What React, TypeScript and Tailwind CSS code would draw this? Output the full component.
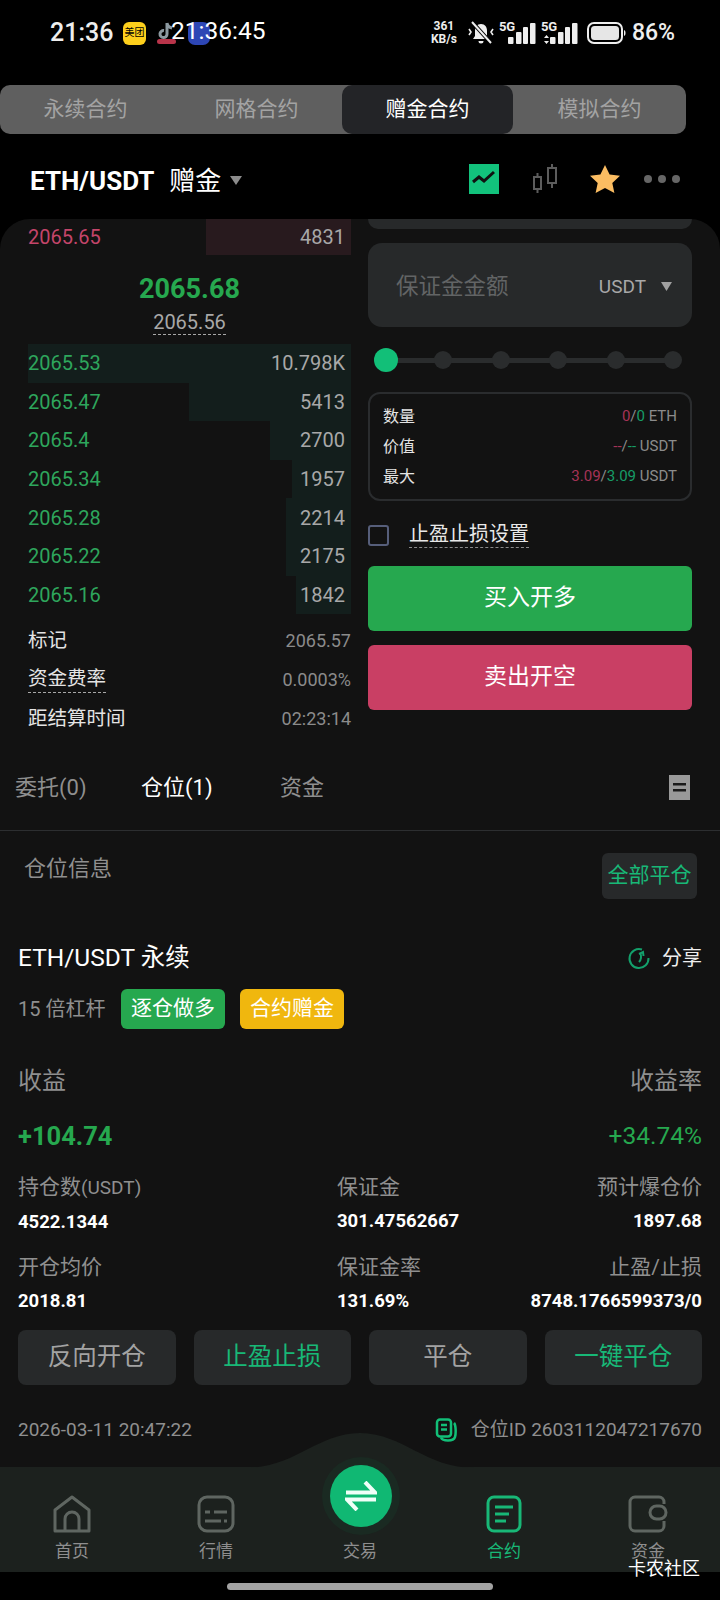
import React from 'react';

const FONT = "font-['Roboto','Noto_Sans_CJK_SC',sans-serif]";

const asks = { price: '2065.65', size: '4831', bar: 145 };
const bids = [
  { price: '2065.53', size: '10.798K', bar: 323 },
  { price: '2065.47', size: '5413', bar: 162 },
  { price: '2065.4', size: '2700', bar: 81 },
  { price: '2065.34', size: '1957', bar: 59 },
  { price: '2065.28', size: '2214', bar: 65 },
  { price: '2065.22', size: '2175', bar: 65 },
  { price: '2065.16', size: '1842', bar: 55 },
];

const Signal = ({ arrows }: { arrows?: boolean }) => (
  <div className="relative h-[24px] w-[37px]">
    <span className="absolute top-[-1px] left-0 text-[13px] leading-[14px] font-bold">5G</span>
    <svg width="37" height="24" viewBox="0 0 37 24">
      {arrows && <path d="M3 17l2.500-3 2.500 3zM3 20l2.500 3 2.500-3z" fill="#eee" />}
      <rect x="9" y="16" width="5.500" height="7" rx="1" fill="#eee" />
      <rect x="17" y="11" width="5.500" height="12" rx="1" fill="#eee" />
      <rect x="24" y="6" width="5" height="17" rx="1" fill="#eee" />
      <rect x="31" y="2" width="5.500" height="21" rx="1" fill="#eee" />
    </svg>
  </div>
);

const StatusBar = () => (
  <div className="relative h-[85px] shrink-0 text-[#eeeeee]">
    <div className="flex items-center pt-[20px] pr-[45px] pl-[50px]">
      <span className="w-[73px] text-[25px] leading-[26px] font-medium">21:36</span>
      <div className="flex h-[23px] w-[23px] items-center justify-center rounded-[6px] bg-[#fdcf1c] text-[10px] leading-none text-black">美团</div>
      <svg width="22" height="24" viewBox="0 0 22 24" className="ml-[10px]">
        <path d="M11 2v11a3.500 3.500 0 1 1-3-3.400M11 2c.5 3 2.500 4.600 5 5" fill="none" stroke="#8c99a0" strokeWidth="3" />
        <rect x="1" y="18" width="19" height="5" rx="2.500" fill="#b8344a" />
      </svg>
      <div className="ml-[10px] h-[23px] w-[22px] rounded-[7px] bg-[#2d46b5]" />
      <div className="ml-auto flex items-center">
        <div className="flex w-[26px] flex-col items-center text-[12px] leading-[13px] font-bold">
          <span>361</span>
          <span>KB/s</span>
        </div>
        <svg width="26" height="24" viewBox="0 0 26 24" className="ml-[11px]">
          <path d="M13 3c-4 0-6 3-6 7v5l-2 3h16l-2-3v-5c0-4-2-7-6-7zM10.500 20a2.500 2.500 0 0 0 5 0z" fill="#eee" />
          <path d="M4 1l19 21" stroke="#000" strokeWidth="4" />
          <path d="M4 1l19 21" stroke="#eee" strokeWidth="2" />
          <path d="M1 8l2 3-2 3M25 8l-2 3 2 3" fill="none" stroke="#eee" strokeWidth="1.600" />
        </svg>
        <div className="ml-[5px]"><Signal /></div>
        <div className="ml-[5px]"><Signal arrows /></div>
        <svg width="40" height="22" viewBox="0 0 40 22" className="ml-[9px]">
          <rect x="1" y="1" width="34" height="20" rx="6" fill="none" stroke="#eee" strokeWidth="2" />
          <rect x="4" y="4" width="28" height="14" rx="3.500" fill="#e6e6e6" />
          <path d="M37 8c2 .5 2 5.500 0 6z" fill="#eee" />
        </svg>
        <span className="ml-[5px] text-[23px] leading-[26px] font-medium">86%</span>
      </div>
    </div>
    <span className="absolute top-[17px] left-[171px] text-[24.5px] leading-[28px] text-white">21:36:45</span>
  </div>
);

const ContractTabs = () => (
  <div className="flex h-[49px] w-[686px] shrink-0 items-stretch rounded-[10px] bg-[#5f5f5f] text-[21px] text-[#a3a3a3]">
    <div className="flex w-[171px] items-center justify-center">永续合约</div>
    <div className="flex w-[171px] items-center justify-center">网格合约</div>
    <div className="flex w-[171px] items-center justify-center rounded-[10px] bg-[#232427] text-white">赠金合约</div>
    <div className="flex w-[173px] items-center justify-center">模拟合约</div>
  </div>
);

const PairHeader = () => (
  <div className="flex h-[85px] shrink-0 items-center pt-[8px] pl-[30px]">
    <span className="text-[26px] leading-none font-bold text-white">ETH/USDT</span>
    <span className="ml-[15px] text-[26px] leading-none text-white">赠金</span>
    <svg width="12" height="9" viewBox="0 0 12 9" className="ml-[9px]"><path d="M0 0h12L6 9z" fill="#8c8c8c" /></svg>
    <div className="ml-auto flex items-center pr-[40px] pb-[3px]">
      <svg width="30" height="30" viewBox="0 0 30 30">
        <rect width="30" height="30" fill="#12c27c" />
        <path d="M4 18l6-5 5 4 10-9" fill="none" stroke="#101010" strokeWidth="3" />
      </svg>
      <svg width="26" height="30" viewBox="0 0 26 30" className="ml-[33px]">
        <g fill="none" stroke="#5c5c5c" strokeWidth="2">
          <rect x="2" y="13" width="7" height="12" />
          <path d="M5.500 9v4M5.500 25v4" />
          <rect x="16" y="4" width="8" height="15" />
          <path d="M20 0v4M20 19v5" />
        </g>
      </svg>
      <svg width="32" height="30" viewBox="0 0 32 30" className="ml-[31px]">
        <path d="M16 1l4.600 9.500 10.400 1.300-7.700 7.100 2.100 10.200L16 24l-9.400 5.100 2.100-10.200L1 11.800l10.400-1.300z" fill="#fbbd62" />
      </svg>
      <div className="ml-[23px] flex gap-[6px]">
        <div className="h-[8px] w-[8px] rounded-full bg-[#666666]" />
        <div className="h-[8px] w-[8px] rounded-full bg-[#666666]" />
        <div className="h-[8px] w-[8px] rounded-full bg-[#666666]" />
      </div>
    </div>
  </div>
);

const BookRow = ({ price, size, bar, ask }: { price: string; size: string; bar: number; ask?: boolean }) => (
  <div className={`relative flex items-center justify-between pr-[6px] text-[20px] leading-none ${ask ? 'h-[36px]' : 'h-[38.6px]'}`}>
    <div className={`absolute top-0 right-0 bottom-0 ${ask ? 'bg-[#281a1e]' : 'bg-[#131e1c]'}`} style={{ width: bar }} />
    <span className={`relative ${ask ? 'text-[#c4456a]' : 'text-[#2ea65c]'}`}>{price}</span>
    <span className="relative text-[#a8a8a8]">{size}</span>
  </div>
);

const InfoRow = ({ label, value, dashed }: { label: string; value: string; dashed?: boolean }) => (
  <div className="flex h-[39px] items-center justify-between">
    <span className={`text-[19.5px] leading-[26px] text-[#e4e4e4] ${dashed ? 'border-b border-dashed border-[#a8a8a8]' : ''}`}>{label}</span>
    <span className="text-[18px] leading-none text-[#8b8b8b]">{value}</span>
  </div>
);

const OrderBook = () => (
  <div className="w-[323px] shrink-0">
    <BookRow price={asks.price} size={asks.size} bar={asks.bar} ask />
    <div className="flex h-[89px] flex-col items-center pt-[16px]">
      <span className="text-[27px] leading-[36px] font-bold text-[#26a84f]">2065.68</span>
      <span className="mt-[3px] border-b border-dashed border-[#a8a8a8] text-[20px] leading-[24px] text-[#a8a8a8]">2065.56</span>
    </div>
    {bids.map((b) => <BookRow key={b.price} {...b} />)}
    <div className="mt-[7px] flex flex-col">
      <InfoRow label="标记" value="2065.57" />
      <InfoRow label="资金费率" value="0.0003%" dashed />
      <InfoRow label="距结算时间" value="02:23:14" />
    </div>
  </div>
);

const TradeForm = () => (
  <div className="ml-[17px] w-[324px] shrink-0">
    <div className="h-[10px] rounded-b-[14px] bg-[#27292a]" />
    <div className="mt-[14px] flex h-[84px] items-center rounded-[14px] bg-[#27292a] pt-[4px] pr-[20px] pl-[28px]">
      <span className="text-[22.5px] text-[#626465]">保证金金额</span>
      <span className="ml-auto text-[19px] text-[#a8a8a8]">USDT</span>
      <svg width="11" height="9" viewBox="0 0 11 9" className="mb-[2px] ml-[15px]"><path d="M0 0h11L5.500 9z" fill="#a0a0a0" /></svg>
    </div>
    <div className="relative mt-[21px] flex h-[24px] items-center pl-[6px]">
      <div className="absolute top-[10px] right-[12px] left-[12px] h-[5px] bg-[#2a2c2d]" />
      <div className="relative h-[24px] w-[24px] rounded-full bg-[#12bf78]" />
      <div className="relative ml-[36px] flex gap-[39.6px]">
        {[0, 1, 2, 3, 4].map((i) => <div key={i} className="h-[18px] w-[18px] rounded-full bg-[#2a2c2d]" />)}
      </div>
    </div>
    <div className="mt-[20px] flex h-[109px] flex-col justify-center rounded-[12px] border-2 border-[#2a2c2e] px-[13px]">
      <div className="flex h-[30px] items-center justify-between text-[16px] text-[#e4e4e4]">
        <span>数量</span>
        <span className="text-[15px] text-[#8b8b8b]"><span className="text-[#a63357]">0</span>/<span className="text-[#179c67]">0</span> ETH</span>
      </div>
      <div className="flex h-[30px] items-center justify-between text-[16px] text-[#e4e4e4]">
        <span>价值</span>
        <span className="text-[15px] text-[#8b8b8b]"><span className="text-[#a63357]">--</span>/<span className="text-[#179c67]">--</span> USDT</span>
      </div>
      <div className="flex h-[30px] items-center justify-between text-[16px] text-[#e4e4e4]">
        <span>最大</span>
        <span className="text-[15px] text-[#8b8b8b]"><span className="text-[#a63357]">3.09</span>/<span className="text-[#179c67]">3.09</span> USDT</span>
      </div>
    </div>
    <div className="mt-[21px] flex h-[26px] items-center">
      <div className="h-[21px] w-[21px] rounded-[3px] border-2 border-[#565e7a]" />
      <span className="ml-[20px] border-b border-dashed border-[#8a8a8a] text-[20px] leading-[25px] text-[#e8e8e8]">止盈止损设置</span>
    </div>
    <div className="mt-[18px] flex h-[65px] items-center justify-center rounded-[6px] bg-[#26a84f] text-[23px] text-white">买入开多</div>
    <div className="mt-[14px] flex h-[65px] items-center justify-center rounded-[6px] bg-[#c93f64] text-[23px] text-white">卖出开空</div>
  </div>
);

const RecordTabs = () => (
  <div className="flex h-[78px] items-center border-b border-[#2c2e30] pr-[30px] pb-[8px] pl-[15px] text-[22px] text-[#8f8f8f]">
    <span className="w-[126px]">委托(0)</span>
    <span className="w-[139px] text-white">仓位(1)</span>
    <span>资金</span>
    <svg width="21" height="25" viewBox="0 0 21 25" className="ml-auto">
      <rect width="21" height="25" fill="#999999" />
      <rect x="4" y="8" width="13" height="2.500" fill="#1a1a1a" />
      <rect x="4" y="14" width="13" height="2.500" fill="#1a1a1a" />
    </svg>
  </div>
);

const Stat = ({ label, value, right }: { label: React.ReactNode; value: string; right?: boolean }) => (
  <div className={`flex flex-col ${right ? 'items-end' : 'items-start'}`}>
    <span className="text-[21px] leading-[28px] text-[#8f8f8f]">{label}</span>
    <span className="mt-[6px] text-[18.5px] leading-[28px] font-bold text-white">{value}</span>
  </div>
);

const PositionCard = () => (
  <div className="px-[18px]">
    <div className="flex h-[69px] items-start justify-between pt-[22px] pr-[5px] pl-[6px]">
      <span className="text-[22px] leading-[32px] text-[#8f8f8f]">仓位信息</span>
      <div className="flex h-[46px] w-[95px] items-center justify-center rounded-[6px] bg-[#27292a] text-[21px] text-[#18b877]">全部平仓</div>
    </div>
    <div className="mt-[40px] flex h-[36px] items-center">
      <span className="text-[24.5px] text-white">ETH/USDT 永续</span>
      <svg width="24" height="24" viewBox="0 0 24 24" className="ml-auto">
        <path d="M15 3.500A9.500 9.500 0 1 0 21.500 12" fill="none" stroke="#13a06b" strokeWidth="2" />
        <path d="M13 7c2 3 1 7-1 9M12 8l4-2 .5 4" fill="none" stroke="#13a06b" strokeWidth="2" />
      </svg>
      <span className="ml-[11px] text-[20px] text-[#eeeeee]">分享</span>
    </div>
    <div className="mt-[13px] flex h-[40px] items-center">
      <span className="w-[103px] text-[20px] text-[#8f8f8f]">15 倍杠杆</span>
      <div className="flex h-[40px] w-[104px] items-center justify-center rounded-[6px] bg-[#26a84f] text-[21px] text-white">逐仓做多</div>
      <div className="ml-[15px] flex h-[40px] w-[104px] items-center justify-center rounded-[6px] bg-[#f0b70e] text-[21px] text-white">合约赠金</div>
    </div>
    <div className="mt-[34px] flex h-[36px] items-center justify-between text-[24px] text-[#8f8f8f]">
      <span>收益</span>
      <span>收益率</span>
    </div>
    <div className="mt-[19px] flex h-[36px] items-center justify-between text-[#26a84f]">
      <span className="text-[25.5px] font-bold">+104.74</span>
      <span className="text-[24.5px]">+34.74%</span>
    </div>
    <div className="mt-[19px] grid grid-cols-[319px_1fr_auto] gap-y-[17px]">
      <Stat label={<>持仓数<span className="text-[19px]">(USDT)</span></>} value="4522.1344" />
      <Stat label="保证金" value="301.47562667" />
      <Stat label="预计爆仓价" value="1897.68" right />
      <Stat label="开仓均价" value="2018.81" />
      <Stat label="保证金率" value="131.69%" />
      <Stat label="止盈/止损" value="8748.1766599373/0" right />
    </div>
    <div className="mt-[15px] grid grid-cols-4 gap-[18px] text-[24.5px]">
      <div className="flex h-[55px] items-center justify-center rounded-[8px] bg-[#27292a] text-[#a3a3a3]">反向开仓</div>
      <div className="flex h-[55px] items-center justify-center rounded-[8px] bg-[#27292a] text-[#18b877]">止盈止损</div>
      <div className="flex h-[55px] items-center justify-center rounded-[8px] bg-[#27292a] text-[#a3a3a3]">平仓</div>
      <div className="flex h-[55px] items-center justify-center rounded-[8px] bg-[#27292a] text-[#18b877]">一键平仓</div>
    </div>
    <div className="mt-[30px] flex h-[30px] items-center justify-between text-[19px] text-[#8f8f8f]">
      <span>2026-03-11 20:47:22</span>
      <div className="flex items-center">
        <svg width="22" height="24" viewBox="0 0 22 24">
          <g fill="none" stroke="#12bf78" strokeWidth="2.500">
            <rect x="2" y="1.500" width="14" height="17" rx="3" />
            <path d="M19 5c2 2 2 11 1 14-1 3-4 3.500-7 3.500-3 0-6-.5-7-3" />
            <path d="M6 7h6M6 11.500h6" />
          </g>
        </svg>
        <span className="ml-[14px]">仓位ID 2603112047217670</span>
      </div>
    </div>
  </div>
);

const NavItem = ({ label, active, children }: { label: string; active?: boolean; children: React.ReactNode }) => (
  <div className="flex w-[144px] flex-col items-center">
    <div className="flex h-[38px] items-center justify-center">{children}</div>
    <span className={`mt-[6px] text-[17px] leading-[24px] ${active ? 'text-[#18b877]' : 'text-[#8e8e8e]'}`}>{label}</span>
  </div>
);

const BottomNav = () => (
  <div className="relative h-[105px] shrink-0 bg-[#1c211e]">
    <svg width="230" height="36" viewBox="0 0 230 36" className="absolute top-[-35px] left-[245px]">
      <path d="M0 36c50 0 70-34 115-35 45 1 65 35 115 35z" fill="#1c211e" />
    </svg>
    <div className="absolute top-[-10px] left-[322px] flex h-[78px] w-[78px] items-center justify-center rounded-full bg-[#1a2a22]">
      <div className="flex h-[62px] w-[62px] items-center justify-center rounded-full bg-[#10b873]">
        <svg width="32" height="30" viewBox="0 0 32 30">
          <path d="M1 11.500h29L20 1M31 18.500H2L12 29" fill="none" stroke="#f0fff8" strokeWidth="4" />
        </svg>
      </div>
    </div>
    <div className="flex pt-[28px]">
      <NavItem label="首页">
        <svg width="38" height="38" viewBox="0 0 38 38">
          <path d="M2 36V15L19 2l17 13v21zM12 36V24a7 7 0 0 1 14 0v12" fill="none" stroke="#5f6661" strokeWidth="3" strokeLinejoin="round" />
        </svg>
      </NavItem>
      <NavItem label="行情">
        <svg width="38" height="38" viewBox="0 0 38 38">
          <rect x="2" y="2" width="34" height="34" rx="8" fill="none" stroke="#5f6661" strokeWidth="3" />
          <path d="M8 17h5M17 17h13M8 26h16M27 26h3" stroke="#5f6661" strokeWidth="3" />
        </svg>
      </NavItem>
      <NavItem label="交易"><div className="h-[38px]" /></NavItem>
      <NavItem label="合约" active>
        <svg width="36" height="38" viewBox="0 0 36 38">
          <rect x="2" y="2" width="32" height="34" rx="6" fill="none" stroke="#18b877" strokeWidth="3" />
          <path d="M9 12h18M9 19h14M9 26h11" stroke="#18b877" strokeWidth="3" />
        </svg>
      </NavItem>
      <NavItem label="资金">
        <svg width="40" height="38" viewBox="0 0 40 38">
          <path d="M36 9V7a5 5 0 0 0-5-5H7a5 5 0 0 0-5 5v24a5 5 0 0 0 5 5h24a5 5 0 0 0 5-5v-5" fill="none" stroke="#5f6661" strokeWidth="3" />
          <rect x="22" y="11" width="16" height="13" rx="6.500" fill="none" stroke="#5f6661" strokeWidth="3" />
        </svg>
      </NavItem>
    </div>
    <span className="absolute top-[90px] left-[628px] text-[18px] leading-[24px] text-white">卡农社区</span>
  </div>
);

export default function App() {
  return (
    <div className={`flex h-[1600px] w-[720px] flex-col overflow-hidden bg-black ${FONT}`}>
      <StatusBar />
      <ContractTabs />
      <PairHeader />
      <div className="h-[1248px] shrink-0 overflow-hidden rounded-t-[30px] bg-[#121212]">
        <div className="flex pl-[28px]">
          <OrderBook />
          <TradeForm />
        </div>
        <div className="mt-[15px]">
          <RecordTabs />
          <PositionCard />
        </div>
      </div>
      <BottomNav />
      <div className="flex flex-1 justify-center pt-[11px]">
        <div className="h-[7px] w-[266px] rounded-full bg-[#a3a3a3]" />
      </div>
    </div>
  );
}
